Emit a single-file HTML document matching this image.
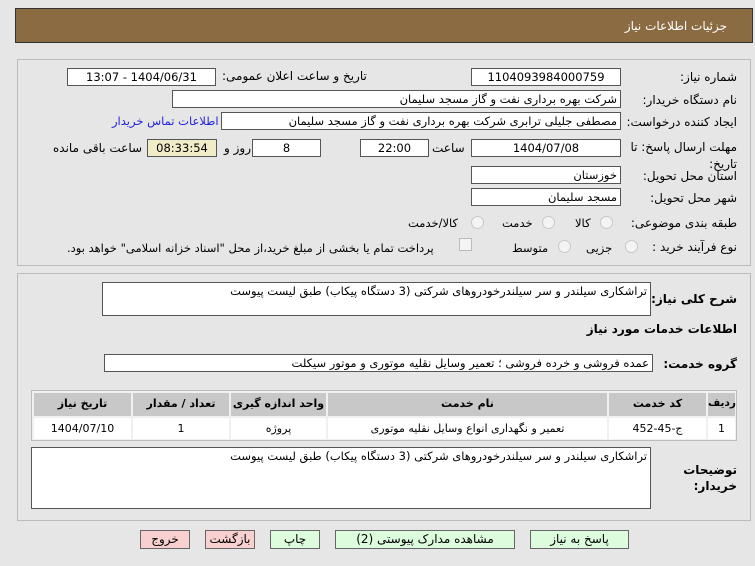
<!DOCTYPE html>
<html><head><meta charset="utf-8"><style>
body{margin:0;width:755px;height:566px;background:#e6e6e6;font-family:"DejaVu Sans",sans-serif;font-size:11.5px;color:#000;position:relative;overflow:hidden}
.a{position:absolute;white-space:nowrap;direction:rtl}
.box{position:absolute;background:#fff;border:1px solid #555;box-sizing:border-box;font-size:11.5px;direction:rtl;white-space:nowrap;line-height:16px;overflow:hidden}
.c{text-align:center}
.r{text-align:right;padding-right:3px}
.lbl{position:absolute;right:18px;direction:rtl;white-space:nowrap;font-size:12px}
.rad{position:absolute;width:11px;height:11px;border:1px solid #c8c8c8;border-radius:50%;background:#f4f4f4}
.btn{position:absolute;top:530px;height:19px;border:1px solid #666;box-sizing:border-box;text-align:center;line-height:17px;font-size:12px}
.t{position:absolute;box-sizing:border-box;text-align:center;line-height:21px;font-size:11px}
</style></head><body>
<div style="position:absolute;left:15px;top:8px;width:738px;height:35px;background:#8b6b42;border:1px solid #333;box-sizing:border-box"></div>
<div class="a" style="right:28px;top:19px;color:#fff;font-size:12px">جزئیات اطلاعات نیاز</div>

<div style="position:absolute;left:17px;top:59px;width:734px;height:207px;border:1px solid #bbb;box-sizing:border-box"></div>
<div style="position:absolute;left:17px;top:273px;width:734px;height:248px;border:1px solid #bbb;box-sizing:border-box"></div>

<div class="lbl" style="top:70px">شماره نیاز:</div>
<div class="box c" style="left:471px;top:68px;width:150px;height:18px">1104093984000759</div>
<div class="a" style="left:222px;top:69px;font-size:12px">تاریخ و ساعت اعلان عمومی:</div>
<div class="box c" style="left:67px;top:68px;width:149px;height:18px">1404/06/31 - 13:07</div>

<div class="lbl" style="top:93px">نام دستگاه خریدار:</div>
<div class="box r" style="left:172px;top:90px;width:449px;height:18px">شرکت بهره برداری نفت و گاز مسجد سلیمان</div>

<div class="lbl" style="top:115px">ایجاد کننده درخواست:</div>
<div class="box r" style="left:221px;top:112px;width:400px;height:18px">مصطفی جلیلی ترابری شرکت بهره برداری نفت و گاز مسجد سلیمان</div>
<div class="a" style="left:112px;top:114px;color:#2222dd">اطلاعات تماس خریدار</div>

<div class="lbl" style="top:139px;line-height:17px;text-align:right">مهلت ارسال پاسخ: تا<br>تاریخ:</div>
<div class="box c" style="left:471px;top:139px;width:150px;height:18px">1404/07/08</div>
<div class="a" style="left:432px;top:141px;font-size:12px">ساعت</div>
<div class="box c" style="left:360px;top:139px;width:69px;height:18px">22:00</div>
<div class="box c" style="left:252px;top:139px;width:69px;height:18px">8</div>
<div class="a" style="left:224px;top:141px;font-size:12px">روز و</div>
<div class="box c" style="left:147px;top:139px;width:70px;height:18px;background:#f0ecc8">08:33:54</div>
<div class="a" style="left:53px;top:141px;font-size:12px">ساعت باقی مانده</div>

<div class="lbl" style="top:169px">استان محل تحویل:</div>
<div class="box r" style="left:471px;top:166px;width:150px;height:18px">خوزستان</div>
<div class="lbl" style="top:191px">شهر محل تحویل:</div>
<div class="box r" style="left:471px;top:188px;width:150px;height:18px">مسجد سلیمان</div>

<div class="lbl" style="top:216px">طبقه بندی موضوعی:</div>
<div class="rad" style="left:600px;top:216px"></div><div class="a" style="left:575px;top:216px">کالا</div>
<div class="rad" style="left:542px;top:216px"></div><div class="a" style="left:502px;top:216px">خدمت</div>
<div class="rad" style="left:471px;top:216px"></div><div class="a" style="left:408px;top:216px">کالا/خدمت</div>

<div class="lbl" style="top:240px">نوع فرآیند خرید :</div>
<div class="rad" style="left:625px;top:240px"></div><div class="a" style="left:586px;top:241px">جزیی</div>
<div class="rad" style="left:558px;top:240px"></div><div class="a" style="left:512px;top:241px">متوسط</div>
<div style="position:absolute;left:459px;top:238px;width:11px;height:11px;border:1px solid #bbb;background:#f4f4f4"></div>
<div class="a" style="left:67px;top:241px">پرداخت تمام یا بخشی از مبلغ خرید،از محل "اسناد خزانه اسلامی" خواهد بود.</div>

<div class="lbl" style="top:292px;font-weight:bold;font-size:12px">شرح کلی نیاز:</div>
<div class="box r" style="left:102px;top:282px;width:549px;height:34px">تراشکاری سیلندر و سر سیلندرخودروهای شرکتی (3 دستگاه پیکاب) طبق لیست پیوست</div>
<div class="lbl" style="top:322px;font-weight:bold;font-size:12px">اطلاعات خدمات مورد نیاز</div>
<div class="lbl" style="top:357px;font-weight:bold;font-size:12px">گروه خدمت:</div>
<div class="box r" style="left:104px;top:354px;width:549px;height:18px">عمده فروشی و خرده فروشی ؛ تعمیر وسایل نقلیه موتوری و موتور سیکلت</div>

<div style="position:absolute;left:31px;top:390px;width:706px;height:51px;border:1px solid #bbb;background:#f0f0f0;box-sizing:border-box"></div>
<div class="t" style="left:708px;top:393px;width:27px;height:23px;background:#c8c8c8;font-weight:bold;font-size:10.5px">ردیف</div>
<div class="t" style="left:609px;top:393px;width:97px;height:23px;background:#c8c8c8;font-weight:bold">کد خدمت</div>
<div class="t" style="left:328px;top:393px;width:279px;height:23px;background:#c8c8c8;font-weight:bold">نام خدمت</div>
<div class="t" style="left:231px;top:393px;width:95px;height:23px;background:#c8c8c8;font-weight:bold">واحد اندازه گیری</div>
<div class="t" style="left:133px;top:393px;width:96px;height:23px;background:#c8c8c8;font-weight:bold">تعداد / مقدار</div>
<div class="t" style="left:34px;top:393px;width:97px;height:23px;background:#c8c8c8;font-weight:bold">تاریخ نیاز</div>
<div class="t" style="left:708px;top:418px;width:27px;height:21px;background:#fff">1</div>
<div class="t" style="left:609px;top:418px;width:97px;height:21px;background:#fff">ج-45-452</div>
<div class="t" style="left:328px;top:418px;width:279px;height:21px;background:#fff;direction:rtl">تعمیر و نگهداری انواع وسایل نقلیه موتوری</div>
<div class="t" style="left:231px;top:418px;width:95px;height:21px;background:#fff">پروژه</div>
<div class="t" style="left:133px;top:418px;width:96px;height:21px;background:#fff">1</div>
<div class="t" style="left:34px;top:418px;width:97px;height:21px;background:#fff">1404/07/10</div>

<div class="lbl" style="top:462px;font-weight:bold;font-size:12px;line-height:16px;text-align:right">توضیحات<br>خریدار:</div>
<div class="box r" style="left:31px;top:447px;width:620px;height:62px">تراشکاری سیلندر و سر سیلندرخودروهای شرکتی (3 دستگاه پیکاب) طبق لیست پیوست</div>

<div class="btn" style="left:140px;width:50px;background:#f8d0d0">خروج</div>
<div class="btn" style="left:205px;width:50px;background:#f8d0d0">بازگشت</div>
<div class="btn" style="left:270px;width:50px;background:#ddfcdd">چاپ</div>
<div class="btn" style="left:335px;width:180px;background:#ddfcdd">مشاهده مدارک پیوستی (2)</div>
<div class="btn" style="left:530px;width:99px;background:#ddfcdd">پاسخ به نیاز</div>
</body></html>
